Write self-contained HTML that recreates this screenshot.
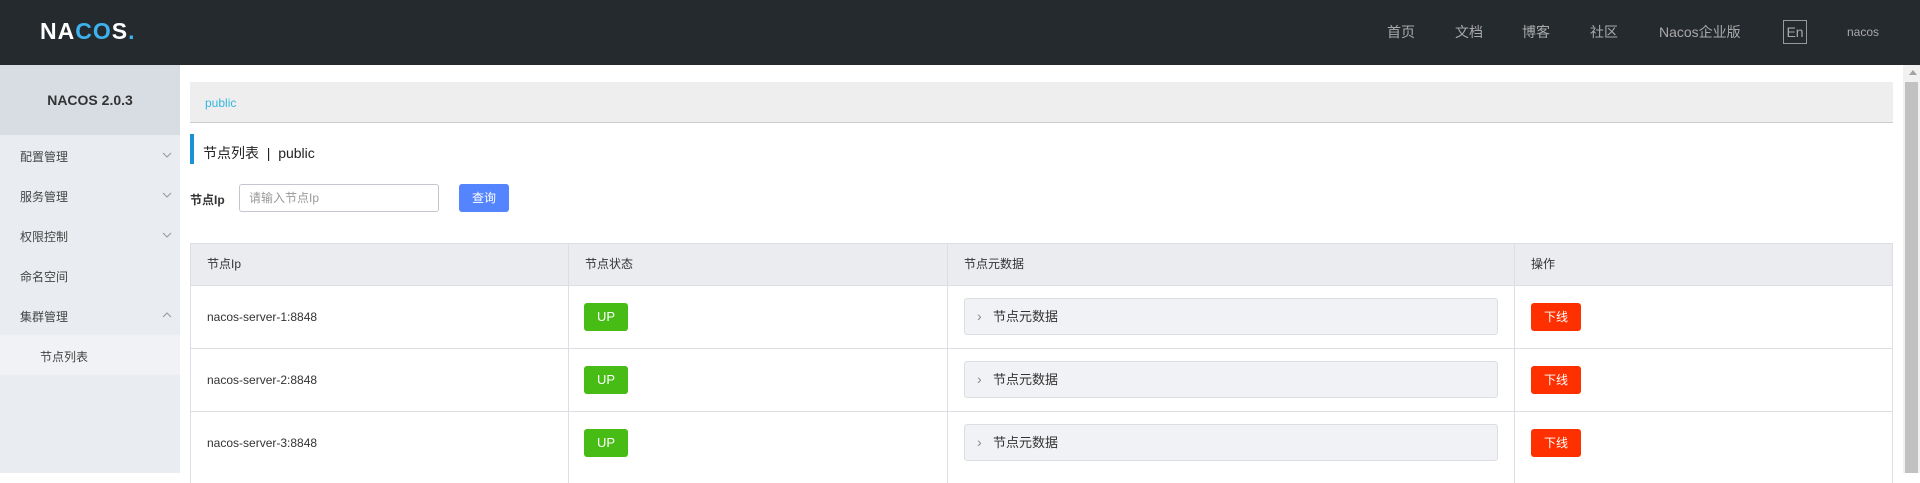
<!DOCTYPE html>
<html><head><meta charset="utf-8"><style>
*{margin:0;padding:0;box-sizing:border-box}
body{width:1920px;height:473px;overflow:hidden;position:relative;background:#fff;font-family:"Liberation Sans","Noto Sans CJK SC",sans-serif;font-size:12px;color:#333}
.abs{position:absolute}
.hdr{left:0;top:0;width:1920px;height:65px;background:#252a2f}
.nav{top:22px;font-size:14px;color:#a9a9a9;line-height:20px}
.side{left:0;top:65px;width:180px;height:408px;background:#e9edf2}
.stitle{left:0;top:65px;width:180px;height:70px;background:#d8dde4;text-align:center;line-height:70px;font-weight:bold;font-size:14px;color:#333}
.mi{left:20px;font-size:12px;color:#444;line-height:16px}
.chev{left:162px}
.th,.td{position:absolute;line-height:16px}
.up{width:44px;height:28px;background:#46bc15;color:#fff;border-radius:3px;text-align:center;line-height:28px;font-size:13px}
.off{width:50px;height:28px;background:#ff3000;color:#fff;border-radius:3px;text-align:center;line-height:28px;font-size:12px}
.meta{width:534px;height:37px;background:#f1f2f5;border:1px solid #dcdee3;border-radius:3px;line-height:35px;padding-left:28px;font-size:13px;color:#333}
.meta:before{content:"›";position:absolute;left:12px;color:#888;font-size:14px}
.hl{height:1px;background:#dcdee3}
.vl{width:1px;background:#dcdee3}
</style></head><body>
<div class="abs hdr"></div>
<div class="abs" style="left:40px;top:20px;font-size:23px;font-weight:bold;color:#fff;letter-spacing:1px;line-height:22px">NA<span style="color:#3db2ef">CO</span>S<span style="color:#3db2ef">.</span></div>
<div class="abs nav" style="left:1387px">首页</div>
<div class="abs nav" style="left:1455px">文档</div>
<div class="abs nav" style="left:1522px">博客</div>
<div class="abs nav" style="left:1590px">社区</div>
<div class="abs nav" style="left:1659px">Nacos企业版</div>
<div class="abs" style="left:1783px;top:20px;width:24px;height:24px;border:1px solid #999;color:#a9a9a9;font-size:14px;text-align:center;line-height:22px">En</div>
<div class="abs nav" style="left:1847px;font-size:12px">nacos</div>

<div class="abs side"></div>
<div class="abs stitle">NACOS 2.0.3</div>
<div class="abs mi" style="top:149px">配置管理</div><svg class="abs chev" style="top:152px" width="10" height="6"><path d="M1 1L5 5L9 1" fill="none" stroke="#999" stroke-width="1"/></svg>
<div class="abs mi" style="top:189px">服务管理</div><svg class="abs chev" style="top:192px" width="10" height="6"><path d="M1 1L5 5L9 1" fill="none" stroke="#999" stroke-width="1"/></svg>
<div class="abs mi" style="top:229px">权限控制</div><svg class="abs chev" style="top:232px" width="10" height="6"><path d="M1 1L5 5L9 1" fill="none" stroke="#999" stroke-width="1"/></svg>
<div class="abs mi" style="top:269px">命名空间</div>
<div class="abs mi" style="top:309px">集群管理</div><svg class="abs chev" style="top:312px" width="10" height="6"><path d="M1 5L5 1L9 5" fill="none" stroke="#999" stroke-width="1"/></svg>
<div class="abs" style="left:0;top:335px;width:180px;height:40px;background:#f0f2f5"></div>
<div class="abs mi" style="left:40px;top:349px">节点列表</div>

<div class="abs" style="left:190px;top:82px;width:1703px;height:41px;background:#eee;border-bottom:1px solid #ccc"></div>
<div class="abs" style="left:205px;top:96px;color:#36b6e0;font-size:12px">public</div>
<div class="abs" style="left:190px;top:134px;width:4px;height:30px;background:#1e90d6"></div>
<div class="abs" style="left:203px;top:143px;font-size:14px;color:#222">节点列表 &nbsp;| &nbsp;public</div>
<div class="abs" style="left:190px;top:191px;font-weight:bold;color:#333">节点Ip</div>
<div class="abs" style="left:239px;top:184px;width:200px;height:28px;border:1px solid #c4c6cf;border-radius:3px;color:#999;line-height:26px;padding-left:9px">请输入节点Ip</div>
<div class="abs" style="left:459px;top:184px;width:50px;height:28px;background:#5584ff;border-radius:3px;color:#fff;text-align:center;line-height:28px">查询</div>

<div class="abs" style="left:190px;top:243px;width:1703px;height:42px;background:#ebecf0"></div>
<div class="abs hl" style="left:190px;top:243px;width:1703px"></div>
<div class="abs hl" style="left:190px;top:285px;width:1703px"></div>
<div class="abs hl" style="left:190px;top:348px;width:1703px"></div>
<div class="abs hl" style="left:190px;top:411px;width:1703px"></div>
<div class="abs vl" style="left:190px;top:243px;height:240px"></div>
<div class="abs vl" style="left:568px;top:243px;height:240px"></div>
<div class="abs vl" style="left:947px;top:243px;height:240px"></div>
<div class="abs vl" style="left:1514px;top:243px;height:240px"></div>
<div class="abs vl" style="left:1892px;top:243px;height:240px"></div>
<div class="th" style="left:207px;top:256px">节点Ip</div>
<div class="th" style="left:585px;top:256px">节点状态</div>
<div class="th" style="left:964px;top:256px">节点元数据</div>
<div class="th" style="left:1531px;top:256px">操作</div>

<div class="td" style="left:207px;top:309px">nacos-server-1:8848</div>
<div class="abs up" style="left:584px;top:303px">UP</div>
<div class="abs meta" style="left:964px;top:298px">节点元数据</div>
<div class="abs off" style="left:1531px;top:303px">下线</div>

<div class="td" style="left:207px;top:372px">nacos-server-2:8848</div>
<div class="abs up" style="left:584px;top:366px">UP</div>
<div class="abs meta" style="left:964px;top:361px">节点元数据</div>
<div class="abs off" style="left:1531px;top:366px">下线</div>

<div class="td" style="left:207px;top:435px">nacos-server-3:8848</div>
<div class="abs up" style="left:584px;top:429px">UP</div>
<div class="abs meta" style="left:964px;top:424px">节点元数据</div>
<div class="abs off" style="left:1531px;top:429px">下线</div>

<div class="abs" style="left:1903px;top:65px;width:17px;height:408px;background:#f1f1f1"></div>
<div class="abs" style="left:1909px;top:70px;width:0;height:0;border-left:4px solid transparent;border-right:4px solid transparent;border-bottom:5px solid #a3a3a3"></div>
<div class="abs" style="left:1905px;top:82px;width:13px;height:391px;background:#c1c1c1"></div>
</body></html>
